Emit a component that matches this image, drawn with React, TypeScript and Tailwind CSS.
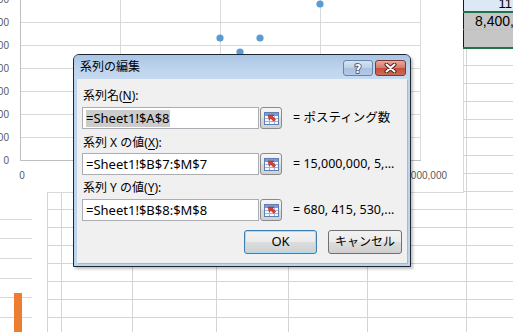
const COLS = [62, 71, 84, 72, 79, 99, 60]
const ROWS = 19

const Sheet = () => (
  <div className="mt-[-6px] grid grid-cols-[62px_71px_84px_72px_79px_99px_60px]">
    {Array.from({ length: ROWS * COLS.length }).map((_, i) => (
      <div key={i} className="h-[18px] border-r border-b border-[#d4d4d4]" />
    ))}
  </div>
)

const ScatterChart = () => {
  const ys = [160, 137, 114, 91, 68, 45, 22, -1]
  const xs = [20, 120, 220, 320, 420]
  const xLabels = ["0", "5,000,000", "10,000,000", "15,000,000", "20,000,000"]
  return (
    <svg width="463" height="192" className="block">
      {ys.slice(1).map((y) => (
        <line key={y} x1="20" x2="420" y1={y + 0.5} y2={y + 0.5} stroke="#d9d9d9" />
      ))}
      {xs.slice(1).map((x) => (
        <line key={x} x1={x + 0.5} x2={x + 0.5} y1="-1" y2="160" stroke="#d9d9d9" />
      ))}
      <line x1="20.5" x2="20.5" y1="-1" y2="161" stroke="#bfbfbf" />
      <line x1="20" x2="421" y1="160.5" y2="160.5" stroke="#bfbfbf" />
      {ys.map((y, i) => (
        <text key={y} x="9" y={y + 4} textAnchor="end" fontSize="10" fill="#595959" fontFamily="Liberation Sans, sans-serif">
          {i * 100}
        </text>
      ))}
      {xs.map((x, i) => (
        <text key={x} x={x + 2} y="179" textAnchor="middle" fontSize="10" fill="#595959" fontFamily="Liberation Sans, sans-serif">
          {xLabels[i]}
        </text>
      ))}
      {[
        [320, 4],
        [220, 38],
        [260, 38],
        [240, 52],
      ].map(([cx, cy]) => (
        <circle key={`${cx}-${cy}`} cx={cx} cy={cy} r="3.6" fill="#5b9bd5" />
      ))}
    </svg>
  )
}

const BarChart = () => (
  <svg width="47" height="140" className="block">
    {[27, 46, 66, 86, 105, 125].map((y) => (
      <line key={y} x1="0" x2="32" y1={y + 0.5} y2={y + 0.5} stroke="#d9d9d9" />
    ))}
    <rect x="14" y="101" width="8" height="40" fill="#ed7d31" />
  </svg>
)

const RefIcon = () => (
  <svg width="15" height="13" viewBox="0 0 15 13">
    <rect x="0.5" y="0.5" width="14" height="12" fill="#f4f8fd" stroke="#5d7fb5" />
    <rect x="1" y="1" width="13" height="3" fill="#7b9bd0" />
    <line x1="1" x2="14" y1="6.5" y2="6.5" stroke="#9db5dc" />
    <line x1="1" x2="14" y1="9.5" y2="9.5" stroke="#9db5dc" />
    <line x1="5.5" x2="5.5" y1="4" y2="12" stroke="#9db5dc" />
    <line x1="10.5" x2="10.5" y1="4" y2="12" stroke="#9db5dc" />
    <polygon points="4,3 10,3 8.6,4.6 11.6,7.6 9.8,9.4 6.8,6.4 5.2,8" fill="#e23b2c" stroke="#a01c12" strokeWidth="0.5" />
  </svg>
)

const RefButton = () => (
  <div className="flex h-[22px] w-[22px] items-center justify-center rounded-[3px] border border-[#8a8a8a] bg-[linear-gradient(#f6f6f6,#e6e6e6_50%,#dadada_51%,#d2d2d2)]">
    <RefIcon />
  </div>
)

const Field = ({ value, result, selected }: { value: string; result: string; selected?: boolean }) => (
  <div className="flex items-center">
    <div className="flex h-[22px] w-[177px] items-center border border-[#abadb3] bg-white pl-[3px] text-[13px] leading-none text-black">
      <span className={selected ? "bg-[#cccccc] py-[2px]" : "py-[2px]"}>{value}</span>
    </div>
    <div className="ml-[1px]">
      <RefButton />
    </div>
    <span className="ml-[11px] text-[12.5px] whitespace-nowrap text-black">{result}</span>
  </div>
)

const Label = ({ children }: { children: React.ReactNode }) => (
  <div className="h-[15px] pl-[1px] text-[12px] leading-[15px] text-black">{children}</div>
)

const Dialog = () => (
  <div className="absolute top-[54px] left-[73px] flex h-[213px] w-[338px] flex-col rounded-t-[6px] border border-[#1e2730] bg-[#bcd4ee] shadow-[2px_2px_3px_rgba(0,0,0,0.25)]">
    <div className="flex h-[24px] items-start rounded-t-[5px] bg-[linear-gradient(#a9c5e5,#bed5ee_60%,#c6daf0)]">
      <span className="mt-[4px] pl-[6px] text-[12px] leading-[16px] text-black">系列の編集</span>
      <div className="mt-[5px] ml-auto flex gap-[2px] pr-[4px]">
        <div className="flex h-[16px] w-[30px] items-center justify-center rounded-[3px] border border-[#6a84a6] bg-[linear-gradient(#d6e3f2,#bdd0e8_50%,#a9c0de_51%,#b4cae6)]">
          <svg width="12" height="13" viewBox="0 0 12 13">
            <text x="6" y="11" textAnchor="middle" fontSize="12" fontWeight="bold" fontFamily="DejaVu Sans, sans-serif" fill="#fff" stroke="#3d4f66" strokeWidth="1.6" paintOrder="stroke">
              ?
            </text>
          </svg>
        </div>
        <div className="flex h-[16px] w-[31px] items-center justify-center rounded-[3px] border border-[#7e3a32] bg-[linear-gradient(#e9a99b,#d57868_50%,#c24f3c_51%,#cf6a58)]">
          <svg width="13" height="10" viewBox="0 0 13 10">
            <path d="M2.5 1.5 L10.5 8.5 M10.5 1.5 L2.5 8.5" stroke="#4a2420" strokeWidth="4" strokeLinecap="round" />
            <path d="M2.5 1.5 L10.5 8.5 M10.5 1.5 L2.5 8.5" stroke="#ffffff" strokeWidth="2" strokeLinecap="round" />
          </svg>
        </div>
      </div>
    </div>
    <div className="mx-[3px] mb-[3px] flex flex-1 flex-col bg-[#f0f0f0] pt-[9px] pl-[5px] shadow-[1px_1px_0_#7fc6ee]">
      <Label>
        系列名(<span className="underline underline-offset-2">N</span>):
      </Label>
      <div className="mt-[4px]">
        <Field value="=Sheet1!$A$8" result="= ポスティング数" selected />
      </div>
      <div className="mt-[6px]">
        <Label>
          系列 X の値(<span className="underline underline-offset-2">X</span>):
        </Label>
      </div>
      <div className="mt-[3px]">
        <Field value="=Sheet1!$B$7:$M$7" result="= 15,000,000, 5,..." />
      </div>
      <div className="mt-[5px]">
        <Label>
          系列 Y の値(<span className="underline underline-offset-2">Y</span>):
        </Label>
      </div>
      <div className="mt-[4px]">
        <Field value="=Sheet1!$B$8:$M$8" result="= 680, 415, 530,..." />
      </div>
      <div className="mt-[9px] flex justify-end gap-[11px] pr-[5px]">
        <button className="flex h-[24px] w-[73px] items-center justify-center rounded-[3px] border border-[#3c7fb1] bg-[linear-gradient(#f2f2f2,#ebebeb_50%,#dddddd_51%,#cfcfcf)] text-[13px] text-black shadow-[inset_0_0_0_1px_#a6dcf7]">
          OK
        </button>
        <button className="flex h-[24px] w-[74px] items-center justify-center rounded-[3px] border border-[#707070] bg-[linear-gradient(#f2f2f2,#ebebeb_50%,#dddddd_51%,#cfcfcf)] text-[12px] text-black">
          キャンセル
        </button>
      </div>
    </div>
  </div>
)

export default function App() {
  return (
    <div className="relative h-[332px] w-[513px] overflow-hidden bg-white font-['Noto_Sans','Noto_Sans_CJK_JP',sans-serif]">
      <Sheet />

      <div className="absolute top-0 left-0 h-[193px] w-[464px] border-r border-b border-[#d9d9d9] bg-white">
        <ScatterChart />
      </div>

      <div className="absolute top-[192px] left-0 h-[150px] w-[48px] border-r border-[#d4d4d4] bg-white">
        <BarChart />
      </div>

      <div className="absolute top-0 left-[463px] w-[60px] font-['Liberation_Sans',sans-serif] text-[13px] text-black">
        <div className="flex h-[11px] items-end justify-end border-l border-[#1a1a1a] bg-[#dde8f5] pr-[11px] leading-[14px]">11</div>
        <div className="h-[2px] bg-[#217346]" />
        <div className="h-[17px] border-b border-l border-[#1a1a1a] border-b-[#c0c0c0] bg-[#c6c6c6] pl-[11px] text-[14px] leading-[17px] whitespace-nowrap">
          8,400,000
        </div>
        <div className="h-[17px] border-l border-[#1a1a1a] bg-[#c6c6c6]" />
        <div className="h-[2px] bg-[#217346]" />
      </div>

      <Dialog />
    </div>
  )
}
